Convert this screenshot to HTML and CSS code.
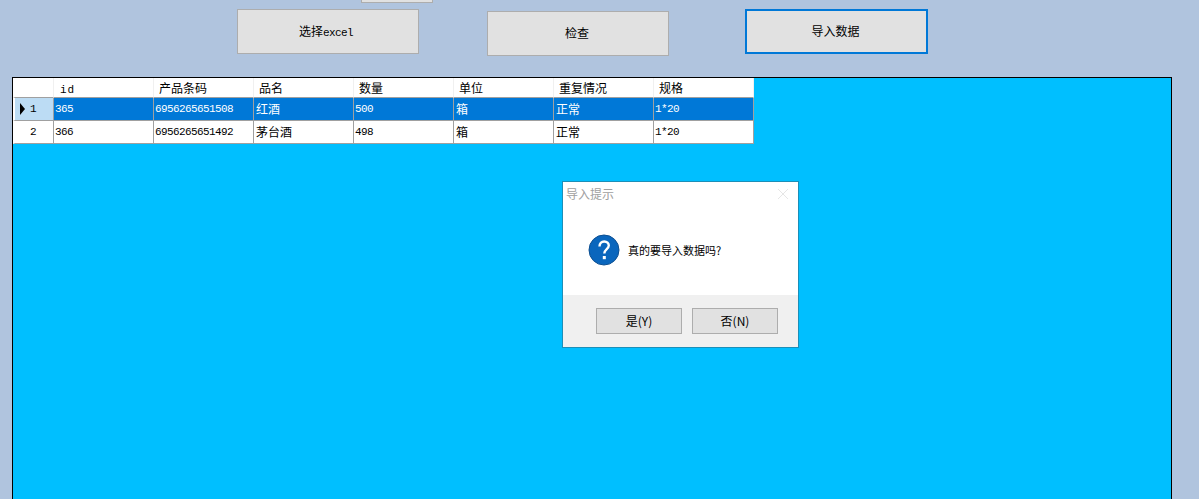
FILE: index.html
```html
<!DOCTYPE html>
<html lang="zh-CN">
<head>
    <meta charset="UTF-8">
    <title>导入数据</title>
    <link rel="stylesheet" href="styles.css">
</head>
<body>

<div class="stub-button"></div>

<div class="toolbar">
    <button class="tool-btn btn-excel">选择<span class="latin">excel</span></button>
    <button class="tool-btn btn-check">检查</button>
    <button class="tool-btn btn-import">导入数据</button>
</div>

<div class="grid-panel">
    <table class="data-grid">
        <thead>
            <tr>
                <th class="row-head"></th>
                <th><span class="latin id-head">id</span></th>
                <th>产品条码</th>
                <th>品名</th>
                <th>数量</th>
                <th>单位</th>
                <th>重复情况</th>
                <th>规格</th>
            </tr>
        </thead>
        <tbody>
            <tr class="selected">
                <td class="row-head latin"><span class="row-arrow"></span>1</td>
                <td class="latin">365</td>
                <td class="latin">6956265651508</td>
                <td>红酒</td>
                <td class="latin">500</td>
                <td>箱</td>
                <td>正常</td>
                <td class="latin">1*20</td>
            </tr>
            <tr>
                <td class="row-head latin">2</td>
                <td class="latin">366</td>
                <td class="latin">6956265651492</td>
                <td>茅台酒</td>
                <td class="latin">498</td>
                <td>箱</td>
                <td>正常</td>
                <td class="latin">1*20</td>
            </tr>
        </tbody>
    </table>
</div>

<!-- 导入提示 -->
<div class="dialog">
    <div class="dialog-title">
        <span>导入提示</span>
        <svg class="dialog-close" width="10" height="10" viewBox="0 0 10 10">
            <path d="M0 0L10 10M10 0L0 10" stroke="#e6e6e6" stroke-width="1" fill="none"/>
        </svg>
    </div>
    <div class="dialog-body">
        <svg class="dialog-icon" width="32" height="32" viewBox="0 0 32 32">
            <circle cx="16" cy="16" r="15" fill="#0a66bd" stroke="#0d4f91" stroke-width="1"/>
            <path d="M11.5 12.5C11.5 9.5 13.5 7.5 16.2 7.5C19 7.5 20.8 9.3 20.8 11.6C20.8 15 16.3 15.2 16.3 19.5" stroke="#fff" stroke-width="2.4" fill="none"/>
            <rect x="14.8" y="22" width="3" height="3.2" fill="#fff"/>
        </svg>
        <span class="dialog-text">真的要导入数据吗?</span>
    </div>
    <div class="dialog-footer">
        <button class="dialog-btn">是(Y)</button>
        <button class="dialog-btn">否(N)</button>
    </div>
</div>

</body>
</html>
```

FILE: styles.css
```css
html, body {
    height: 499px;
    overflow: hidden;
}
body {
    margin: 0;
    position: relative;
    background-color: #b0c4de;
    font-family: "Noto Sans CJK SC", sans-serif;
    font-size: 12px;
    color: #000;
}
.latin {
    font-family: "Liberation Mono", "Noto Sans CJK SC", monospace;
    font-size: 11px;
    letter-spacing: -0.6px;
}
.stub-button {
    width: 72px;
    height: 3px;
    margin-left: 361px;
    box-sizing: border-box;
    background-color: #e1e1e1;
    border: 1px solid #adadad;
    border-top: none;
}
.toolbar {
    display: flex;
    height: 68px;
    margin-top: 6px;
    padding-left: 237px;
    align-items: flex-start;
}
.tool-btn {
    width: 182px;
    height: 45px;
    padding: 0 2px 2px 0;
    background-color: #e1e1e1;
    border: 1px solid #adadad;
    font-family: inherit;
    font-size: 12px;
    color: #000;
}
.btn-excel {
    padding-right: 4px;
}
.btn-check {
    margin-top: 2px;
    margin-left: 68px;
}
.btn-import {
    width: 183px;
    margin-left: 76px;
    border: 2px solid #0078d7;
}
.grid-panel {
    width: 1160px;
    height: 440px;
    margin-left: 12px;
    box-sizing: border-box;
    background-color: #00bfff;
    border: 1px solid #000;
}
.data-grid {
    border-collapse: separate;
    border-spacing: 0;
    table-layout: fixed;
    width: 741px;
    background-color: #fff;
}
.data-grid th, .data-grid td {
    width: 100px;
    box-sizing: border-box;
    padding: 0 0 2px 2px;
    text-align: left;
    font-weight: normal;
    white-space: nowrap;
    overflow: hidden;
    border-right: 1px solid #a0a0a0;
    border-bottom: 1px solid #a0a0a0;
}
.data-grid th {
    height: 20px;
    padding: 0 0 1px 5px;
    border-right-color: #f0f0f0;
}
.data-grid td {
    height: 23px;
}
.data-grid td.latin {
    padding: 0 0 0 1px;
}
.data-grid .row-head, .data-grid td.row-head {
    width: 41px;
    padding: 0 2px 0 0;
    position: relative;
    text-align: center;
    border-left: 2px solid #fff;
}
.id-head {
    letter-spacing: 1px;
    margin-left: 1px;
}
.selected td {
    background-color: #0078d7;
    color: #fff;
}
.selected .row-head {
    background-color: #bcdcf4;
    color: #000;
}
.row-arrow {
    position: absolute;
    left: 5px;
    top: 5px;
    border-left: 5px solid #000;
    border-top: 6px solid transparent;
    border-bottom: 6px solid transparent;
}
.dialog {
    position: absolute;
    left: 562px;
    top: 181px;
    width: 237px;
    height: 167px;
    box-sizing: border-box;
    display: flex;
    flex-direction: column;
    background-color: #fff;
    border: 1px solid #1c8fb8;
}
.dialog-title {
    display: flex;
    justify-content: space-between;
    align-items: center;
    height: 22px;
    padding: 0 10px 0 3px;
    color: #a0a0a0;
}
.dialog-close {
    margin-top: 2px;
}
.dialog-body {
    flex: 1;
    display: flex;
    align-items: center;
    padding: 0 0 0 25px;
}
.dialog-text {
    margin-left: 8px;
    font-size: 11px;
}
.dialog-footer {
    height: 52px;
    box-sizing: border-box;
    display: flex;
    justify-content: flex-end;
    gap: 10px;
    padding: 13px 20px 0 0;
    background-color: #f0f0f0;
}
.dialog-btn {
    width: 86px;
    height: 26px;
    padding: 0 0 2px;
    background-color: #e1e1e1;
    border: 1px solid #adadad;
    font-family: inherit;
    font-size: 12px;
    color: #000;
}
```
